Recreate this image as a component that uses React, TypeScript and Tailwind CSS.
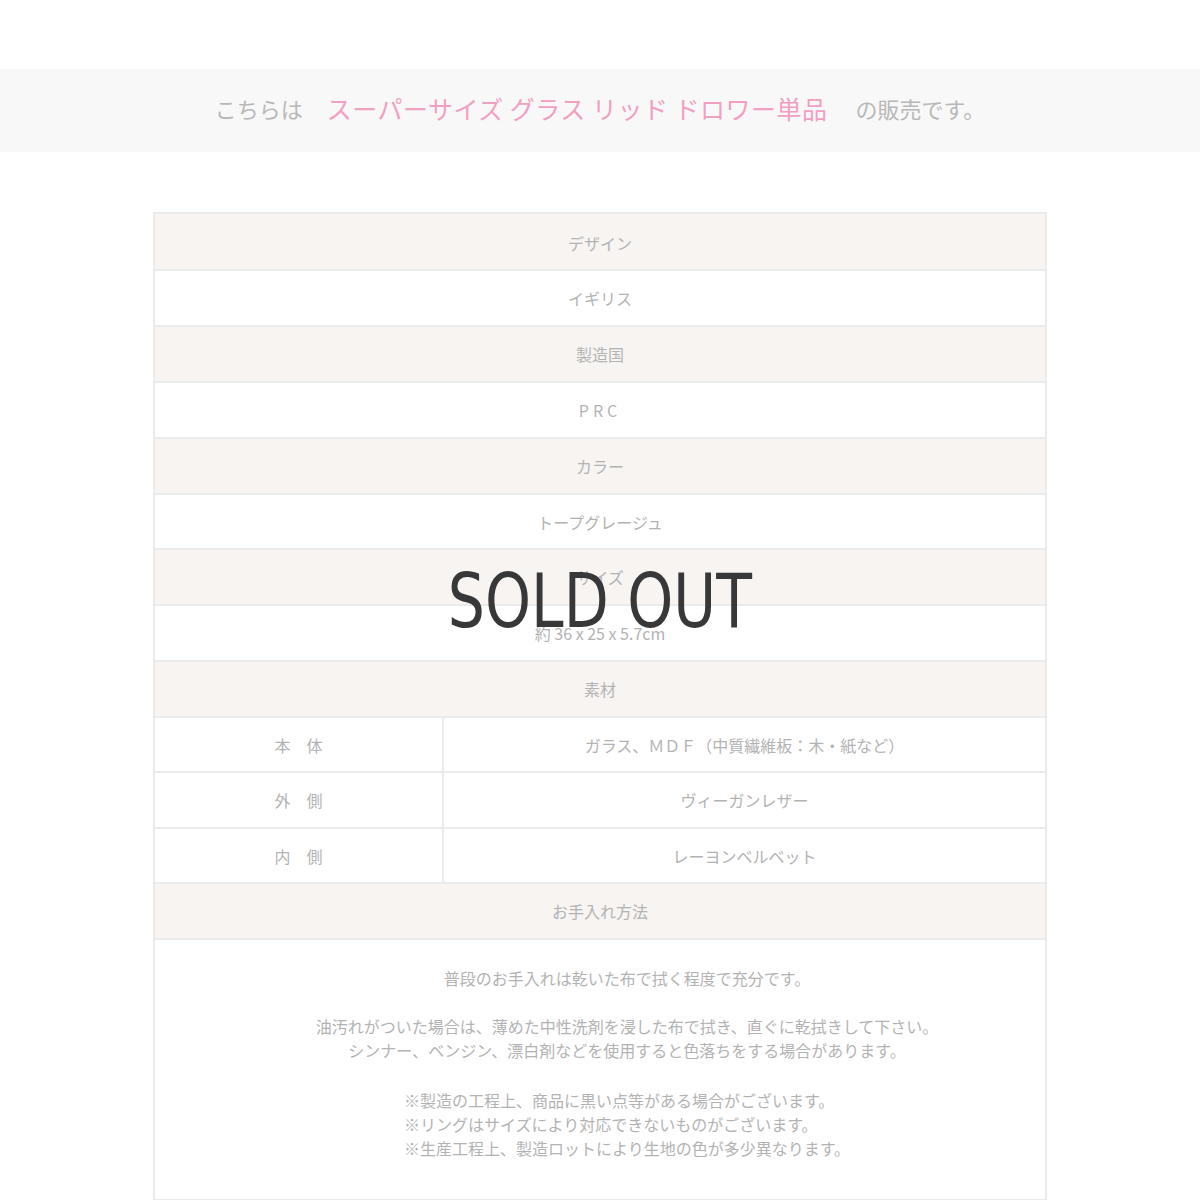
const jp = { fontFamily: '"Noto Sans CJK JP", "Noto Sans", sans-serif' }

const rows: { label: string; value: string; wide?: boolean; short?: boolean }[] = [
    { label: 'デザイン', value: 'イギリス' },
    { label: '製造国', value: 'PRC', wide: true },
    { label: 'カラー', value: 'トープグレージュ', short: true },
    { label: 'サイズ', value: '約 36 x 25 x 5.7cm' },
]

const materials = [
    { part: '本　体', value: 'ガラス、ＭＤＦ（中質繊維板：木・紙など）', short: true },
    { part: '外　側', value: 'ヴィーガンレザー' },
    { part: '内　側', value: 'レーヨンベルベット', short: true },
]

function HeadRow({ children, first }: { children: React.ReactNode; first?: boolean }) {
    return (
        <div
            className={`flex items-center justify-center bg-[#f7f4f2] ${
                first ? 'h-[55px] pt-[3px]' : 'h-[56px] border-t-2 border-[#ebebeb]'
            }`}
        >
            {children}
        </div>
    )
}

function ValueRow({ children, wide, short }: { children: React.ReactNode; wide?: boolean; short?: boolean }) {
    return (
        <div
            className={`flex items-center justify-center bg-white border-t-2 border-[#ebebeb] ${
                short ? 'h-[55px]' : 'h-[56px]'
            } ${wide ? 'tracking-[0.25em]' : ''}`}
        >
            {children}
        </div>
    )
}

export default function App() {
    return (
        <div className="relative w-[1200px] h-[1200px] overflow-hidden bg-white" style={jp}>
            {/* notice band */}
            <div className="mt-[69px] h-[83px] pb-[4px] bg-[#f8f8f8] flex items-center justify-center text-[22px] text-[#b8b8b8]">
                <span>こちらは</span>
                <span className="ml-[24px] mr-[28px] text-[25px] tracking-[0.02em] text-[#f2a0c2]">
                    スーパーサイズ グラス リッド ドロワー単品
                </span>
                <span>の販売です。</span>
            </div>

            {/* spec table */}
            <div className="mx-auto mt-[60px] w-[894px] border-2 border-[#ebebeb] text-[16px] text-[#b3b3b3]">
                {rows.map((r, i) => (
                    <div key={r.label}>
                        <HeadRow first={i === 0}>{r.label}</HeadRow>
                        <ValueRow wide={r.wide} short={r.short}>
                            {r.value}
                        </ValueRow>
                    </div>
                ))}

                <HeadRow>素材</HeadRow>
                {materials.map(m => (
                    <div
                        key={m.part}
                        className={`flex border-t-2 border-[#ebebeb] ${m.short ? 'h-[55px]' : 'h-[56px]'}`}
                    >
                        <div className="w-[289px] flex items-center justify-center border-r-2 border-[#ebebeb]">
                            {m.part}
                        </div>
                        <div className="flex-1 flex items-center justify-center">{m.value}</div>
                    </div>
                ))}

                <HeadRow>お手入れ方法</HeadRow>
                <div className="border-t-2 border-[#ebebeb] h-[261px] pt-[26px] pl-[54px] text-center leading-[24px]">
                    <p>普段のお手入れは乾いた布で拭く程度で充分です。</p>
                    <p className="mt-[24px]">
                        油汚れがついた場合は、薄めた中性洗剤を浸した布で拭き、直ぐに乾拭きして下さい。
                        <br />
                        シンナー、ベンジン、漂白剤などを使用すると色落ちをする場合があります。
                    </p>
                    <div className="mt-[26px] flex justify-center">
                        <p className="text-left">
                            ※製造の工程上、商品に黒い点等がある場合がございます。
                            <br />
                            ※リングはサイズにより対応できないものがございます。
                            <br />
                            ※生産工程上、製造ロットにより生地の色が多少異なります。
                        </p>
                    </div>
                </div>
            </div>

            {/* sold out overlay */}
            <div className="absolute inset-x-0 top-[564px] flex justify-center pointer-events-none">
                <span
                    className="inline-block scale-x-[0.78] text-[75px] leading-none text-[#383838]"
                    style={{ fontFamily: '"DejaVu Sans", sans-serif' }}
                >
                    SOLD OUT
                </span>
            </div>
        </div>
    )
}
